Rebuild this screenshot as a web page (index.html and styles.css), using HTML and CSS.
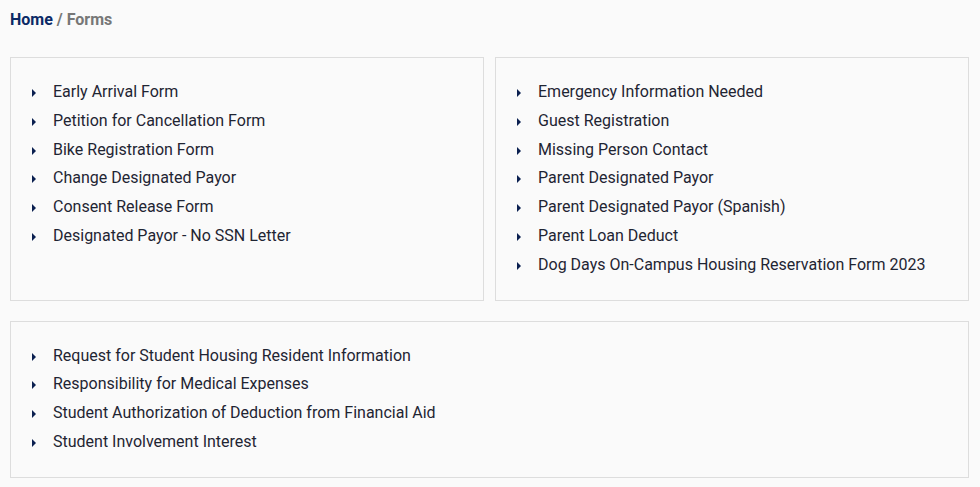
FILE: index.html
```html
<!DOCTYPE html>
<html>
<head>
<meta charset="utf-8">
<link rel="stylesheet" href="styles.css">
</head>
<body>
<div class="page">
  <nav class="crumbs"><a class="home" href="#">Home</a><span class="sep"> / Forms</span></nav>
  <div class="row two">
    <div class="box">
      <ul class="list">
        <li>Early Arrival Form</li>
        <li>Petition for Cancellation Form</li>
        <li>Bike Registration Form</li>
        <li>Change Designated Payor</li>
        <li>Consent Release Form</li>
        <li>Designated Payor - No SSN Letter</li>
      </ul>
    </div>
    <div class="box">
      <ul class="list">
        <li>Emergency Information Needed</li>
        <li>Guest Registration</li>
        <li>Missing Person Contact</li>
        <li>Parent Designated Payor</li>
        <li>Parent Designated Payor (Spanish)</li>
        <li>Parent Loan Deduct</li>
        <li>Dog Days On-Campus Housing Reservation Form 2023</li>
      </ul>
    </div>
  </div>
  <div class="row">
    <div class="box">
      <ul class="list">
        <li>Request for Student Housing Resident Information</li>
        <li>Responsibility for Medical Expenses</li>
        <li>Student Authorization of Deduction from Financial Aid</li>
        <li>Student Involvement Interest</li>
      </ul>
    </div>
  </div>
</div>
</body>
</html>
```
FILE: styles.css
```css
html, body {
  margin: 0;
  background: #fafafa;
}
body {
  font-family: Roboto, "Liberation Sans", sans-serif;
  color: #1f2533;
}
.page {
  padding: 10px 11px 0 10px;
}
.crumbs {
  font-size: 16px;
  font-weight: 700;
  line-height: 19px;
  height: 19px;
  margin-bottom: 28px;
}
.home {
  color: #0b2a66;
  text-decoration: none;
}
.sep {
  color: #777;
}
.row {
  display: flex;
  gap: 11px;
  margin-bottom: 20px;
}
.box {
  flex: 1;
  border: 1px solid #ddd;
  padding: 20px 20px 20px 20px;
}
.list {
  list-style: none;
  margin: 0;
  padding: 0;
}
.list li {
  position: relative;
  font-size: 16px;
  line-height: 28.8px;
  padding-left: 22px;
  color: #1f2533;
}
.list li::before {
  content: "";
  position: absolute;
  left: 1px;
  top: 11px;
  border-left: 4px solid #0b2050;
  border-top: 4px solid transparent;
  border-bottom: 4px solid transparent;
}
```
